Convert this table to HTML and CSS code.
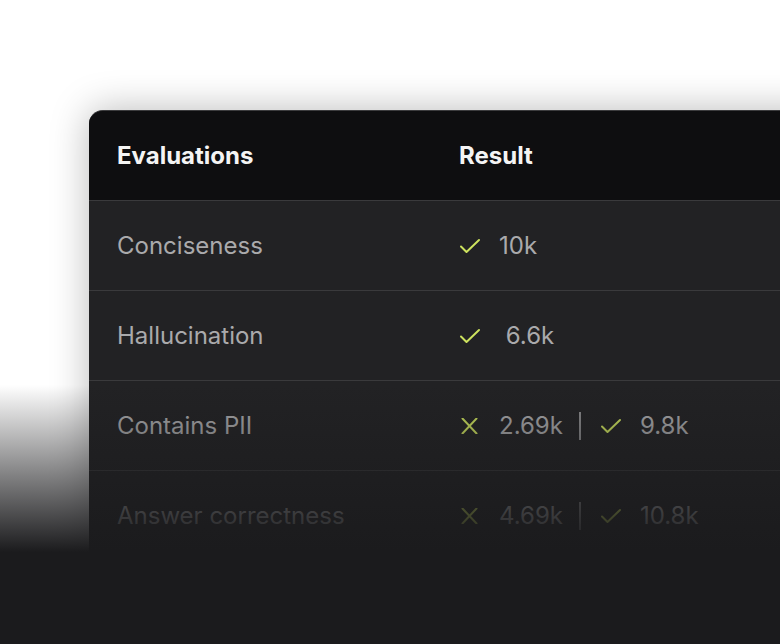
FILE: index.html
```html
<!DOCTYPE html>
<html lang="en">
<head>
<meta charset="utf-8">
<title>Evaluations</title>
<link rel="stylesheet" href="styles.css">
</head>
<body>
<div class="stage">
  <div class="card">
    <div class="row head">
      <div class="cell">Evaluations</div>
      <div class="cell">Result</div>
    </div>
    <div class="row">
      <div class="cell name">Conciseness</div>
      <div class="cell result">
        <svg class="ico" viewBox="0 0 22 16"><path d="M2 8.5 L7.5 14 L20 2" /></svg>
        <span>10k</span>
      </div>
    </div>
    <div class="row">
      <div class="cell name">Hallucination</div>
      <div class="cell result">
        <svg class="ico" viewBox="0 0 22 16"><path d="M2 8.5 L7.5 14 L20 2" /></svg>
        <span>&nbsp;6.6k</span>
      </div>
    </div>
    <div class="row">
      <div class="cell name">Contains PII</div>
      <div class="cell result">
        <svg class="ico" viewBox="0 0 22 16"><path d="M3.5 0.5 L17.5 15.5 M17.5 0.5 L3.5 15.5" /></svg>
        <span>2.69k</span>
        <span class="sep"></span>
        <svg class="ico" viewBox="0 0 22 16"><path d="M2 8.5 L7.5 14 L20 2" /></svg>
        <span>9.8k</span>
      </div>
    </div>
    <div class="row">
      <div class="cell name">Answer correctness</div>
      <div class="cell result">
        <svg class="ico" viewBox="0 0 22 16"><path d="M3.5 0.5 L17.5 15.5 M17.5 0.5 L3.5 15.5" /></svg>
        <span>4.69k</span>
        <span class="sep"></span>
        <svg class="ico" viewBox="0 0 22 16"><path d="M2 8.5 L7.5 14 L20 2" /></svg>
        <span>10.8k</span>
      </div>
    </div>
    <div class="row"></div>
  </div>
  <div class="fade"></div>
</div>
</body>
</html>
```
FILE: styles.css
```css
html, body {
  margin: 0;
  padding: 0;
  background: #ffffff;
}
body {
  font-family: Inter, "Noto Sans", sans-serif;
  width: 780px;
  height: 644px;
  overflow: hidden;
}
.stage {
  position: relative;
  width: 780px;
  height: 644px;
  overflow: hidden;
  padding: 110px 0 0 89px;
  box-sizing: border-box;
}
.card {
  width: 760px;
  background: #222224;
  border-top: 1px solid #3c3c3e;
  border-top-left-radius: 14px;
  box-shadow: 0 0 38px rgba(0, 0, 0, 0.28);
  overflow: hidden;
}
.row {
  display: grid;
  grid-template-columns: 342px 1fr;
  align-items: center;
  height: 89px;
  border-top: 1px solid #3a3a3c;
  padding-left: 28px;
  font-size: 24px;
  color: #aaaaac;
}
.row.head {
  height: 89px;
  border-top: none;
  background: #0e0e10;
  color: #f4f4f4;
  font-weight: 700;
  font-size: 24px;
}
.cell {
  white-space: nowrap;
}
.result {
  display: flex;
  align-items: center;
}
.ico {
  width: 22px;
  height: 16px;
  fill: none;
  stroke: #cde25e;
  stroke-width: 2;
  stroke-linecap: round;
  stroke-linejoin: round;
  margin-right: 18px;
}
.sep {
  width: 2px;
  height: 28px;
  background: #8a8a8c;
  margin: 0 19px 0 16px;
}
.fade {
  position: absolute;
  left: 0;
  right: 0;
  top: 385px;
  bottom: 0;
  background: linear-gradient(to bottom, rgba(27, 27, 29, 0) 0px, rgba(27, 27, 29, 0.55) 90px, #1b1b1d 167px);
}
```
